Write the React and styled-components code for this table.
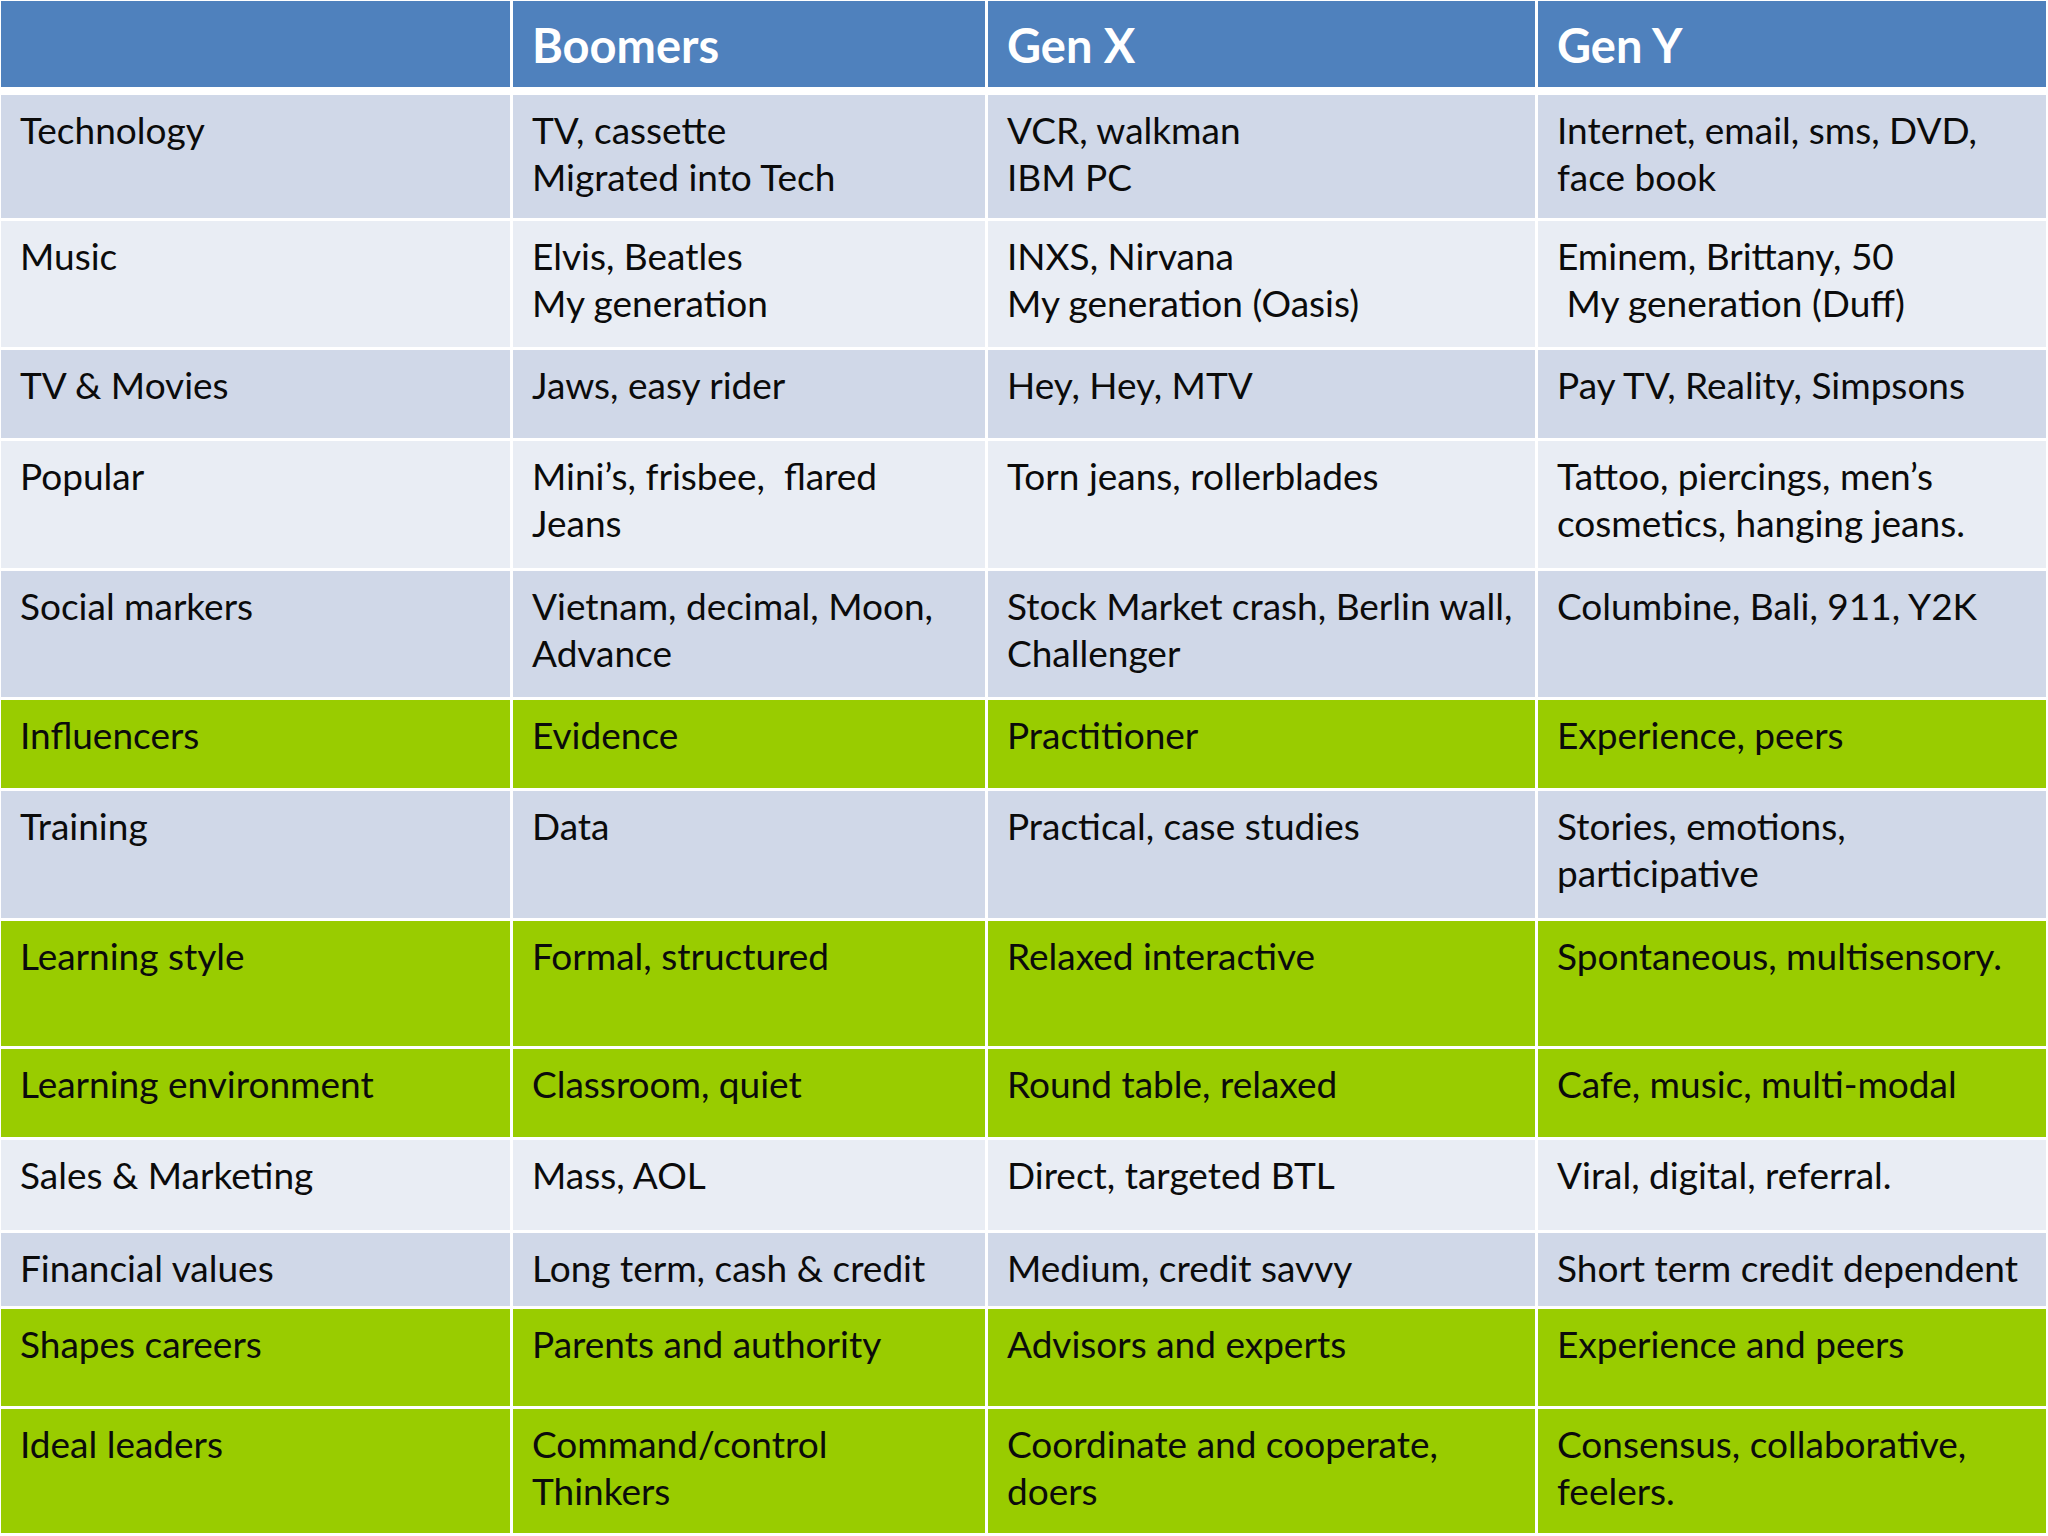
import React from "react";
import styled, { createGlobalStyle } from "styled-components";

const Global = createGlobalStyle`
  html, body { margin: 0; padding: 0; background: #ffffff; }
  body { width: 2048px; height: 1536px; overflow: hidden; }
`;

const COLORS = {
  dark: "#D0D8E8",
  light: "#E9EDF4",
  green: "#99CC00",
};

const Page = styled.div`
  padding: 1px;
  width: 2048px;
  height: 1536px;
  box-sizing: border-box;
  font-family: Lato, "Open Sans", "Liberation Sans", sans-serif;
`;

const Table = styled.div`
  display: flex;
  flex-direction: column;
  gap: 3px;
  width: 2045px;
`;

const Grid = styled.div`
  display: grid;
  grid-template-columns: 509px 472px 547px 508px;
  column-gap: 3px;
  height: ${(p) => p.$h}px;
`;

const HeaderRow = styled(Grid)`
  margin-bottom: 5px;
`;

const HeadCell = styled.div`
  background: #4f81bd;
  color: #ffffff;
  font-weight: 700;
  font-size: 47px;
  line-height: 56px;
  padding: 16px 0 0 19px;
  white-space: pre;
`;

const Cell = styled.div`
  background: ${(p) => COLORS[p.$tone]};
  color: #0b0b0b;
  font-size: 37px;
  line-height: 47px;
  padding: 11px 0 0 19px;
  white-space: pre;
  overflow: hidden;
`;

const Line = styled.div``;

const headers = ["", "Boomers", "Gen X", "Gen Y"];

const rows = [
  { h: 123, tone: "dark", cells: [["Technology"], ["TV, cassette", "Migrated into Tech"], ["VCR, walkman", "IBM PC"], ["Internet, email, sms, DVD,", "face book"]] },
  { h: 126, tone: "light", cells: [["Music"], ["Elvis, Beatles", "My generation"], ["INXS, Nirvana", "My generation (Oasis)"], ["Eminem, Brittany, 50", " My generation (Duff)"]] },
  { h: 88, tone: "dark", cells: [["TV & Movies"], ["Jaws, easy rider"], ["Hey, Hey, MTV"], ["Pay TV, Reality, Simpsons"]] },
  { h: 127, tone: "light", cells: [["Popular"], ["Mini\u2019s, frisbee,  flared", "Jeans"], ["Torn jeans, rollerblades"], ["Tattoo, piercings, men\u2019s", "cosmetics, hanging jeans."]] },
  { h: 126, tone: "dark", cells: [["Social markers"], ["Vietnam, decimal, Moon,", "Advance"], ["Stock Market crash, Berlin wall,", "Challenger"], ["Columbine, Bali, 911, Y2K"]] },
  { h: 88, tone: "green", cells: [["Influencers"], ["Evidence"], ["Practitioner"], ["Experience, peers"]] },
  { h: 127, tone: "dark", cells: [["Training"], ["Data"], ["Practical, case studies"], ["Stories, emotions,", "participative"]] },
  { h: 125, tone: "green", cells: [["Learning style"], ["Formal, structured"], ["Relaxed interactive"], ["Spontaneous, multisensory."]] },
  { h: 88, tone: "green", cells: [["Learning environment"], ["Classroom, quiet"], ["Round table, relaxed"], ["Cafe, music, multi-modal"]] },
  { h: 90, tone: "light", cells: [["Sales & Marketing"], ["Mass, AOL"], ["Direct, targeted BTL"], ["Viral, digital, referral."]] },
  { h: 73, tone: "dark", cells: [["Financial values"], ["Long term, cash & credit"], ["Medium, credit savvy"], ["Short term credit dependent"]] },
  { h: 97, tone: "green", cells: [["Shapes careers"], ["Parents and authority"], ["Advisors and experts"], ["Experience and peers"]] },
  { h: 124, tone: "green", cells: [["Ideal leaders"], ["Command/control", "Thinkers"], ["Coordinate and cooperate,", "doers"], ["Consensus, collaborative,", "feelers."]] },
];

export default function App() {
  return (
    <Page>
      <Global />
      <Table>
        <HeaderRow $h={86}>
          {headers.map((h, i) => (
            <HeadCell key={i}>{h}</HeadCell>
          ))}
        </HeaderRow>
        {rows.map((r, ri) => (
          <Grid key={ri} $h={r.h}>
            {r.cells.map((lines, ci) => (
              <Cell key={ci} $tone={r.tone}>
                {lines.map((l, li) => (
                  <Line key={li}>{l}</Line>
                ))}
              </Cell>
            ))}
          </Grid>
        ))}
      </Table>
    </Page>
  );
}
